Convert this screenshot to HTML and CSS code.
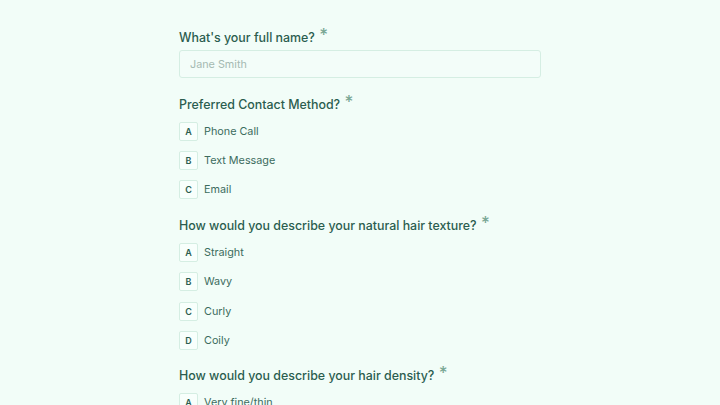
FILE: index.html
```html
<!DOCTYPE html>
<html>
<head>
<meta charset="utf-8">
<link rel="stylesheet" href="styles.css">
</head>
<body>
<main class="form">
  <section class="question">
    <label class="q-label q-label-input">What's your full name? <span class="req">*</span></label>
    <input class="text-input" type="text" placeholder="Jane Smith">
  </section>

  <section class="question">
    <div class="q-label">Preferred Contact Method? <span class="req">*</span></div>
    <ul class="options">
      <li class="option"><span class="key">A</span><span class="opt-text">Phone Call</span></li>
      <li class="option"><span class="key">B</span><span class="opt-text">Text Message</span></li>
      <li class="option"><span class="key">C</span><span class="opt-text">Email</span></li>
    </ul>
  </section>

  <section class="question">
    <div class="q-label">How would you describe your natural hair texture? <span class="req">*</span></div>
    <ul class="options">
      <li class="option"><span class="key">A</span><span class="opt-text">Straight</span></li>
      <li class="option"><span class="key">B</span><span class="opt-text">Wavy</span></li>
      <li class="option"><span class="key">C</span><span class="opt-text">Curly</span></li>
      <li class="option"><span class="key">D</span><span class="opt-text">Coily</span></li>
    </ul>
  </section>

  <section class="question">
    <div class="q-label">How would you describe your hair density? <span class="req">*</span></div>
    <ul class="options">
      <li class="option"><span class="key">A</span><span class="opt-text">Very fine/thin</span></li>
      <li class="option"><span class="key">B</span><span class="opt-text">Medium</span></li>
      <li class="option"><span class="key">C</span><span class="opt-text">Thick/dense</span></li>
    </ul>
  </section>
</main>
</body>
</html>
```

FILE: styles.css
```css
html, body {
  margin: 0;
  padding: 0;
  background: #f2fdf8;
  font-family: Inter, "Noto Sans", sans-serif;
  color: #2b5d4f;
}

.form {
  width: 362px;
  margin: 0 auto;
  padding-top: 29px;
  display: flex;
  flex-direction: column;
  gap: 17.5px;
}

.question {
  display: flex;
  flex-direction: column;
}

.q-label {
  font-size: 12.4px;
  font-weight: 500;
  line-height: 17px;
  margin-bottom: 9px;
}

.q-label-input {
  margin-bottom: 4px;
}

.req {
  color: #7aa895;
  font-size: 17px;
  font-weight: 500;
  line-height: 0;
  position: relative;
  top: -1px;
  margin-left: 1px;
}

.text-input {
  box-sizing: border-box;
  width: 100%;
  height: 28px;
  border: 1px solid #d5eee3;
  border-radius: 3px;
  background: #f3fdf9;
  padding: 0 10px;
  font-family: inherit;
  font-size: 10.8px;
  color: #2b5d4f;
  outline: none;
}

.text-input::placeholder {
  color: #a5bab2;
}

.options {
  list-style: none;
  margin: 0;
  padding: 0;
  display: flex;
  flex-direction: column;
  gap: 10.4px;
}

.option {
  display: flex;
  align-items: center;
  gap: 6px;
  height: 19px;
}

.key {
  box-sizing: border-box;
  width: 19px;
  height: 19px;
  border: 1px solid #d5eee3;
  border-radius: 2px;
  background: #f8fffc;
  display: flex;
  align-items: center;
  justify-content: center;
  font-size: 9px;
  font-weight: 600;
  color: #2b5d4f;
}

.opt-text {
  font-size: 10.8px;
  color: #3c6c5e;
}
```
